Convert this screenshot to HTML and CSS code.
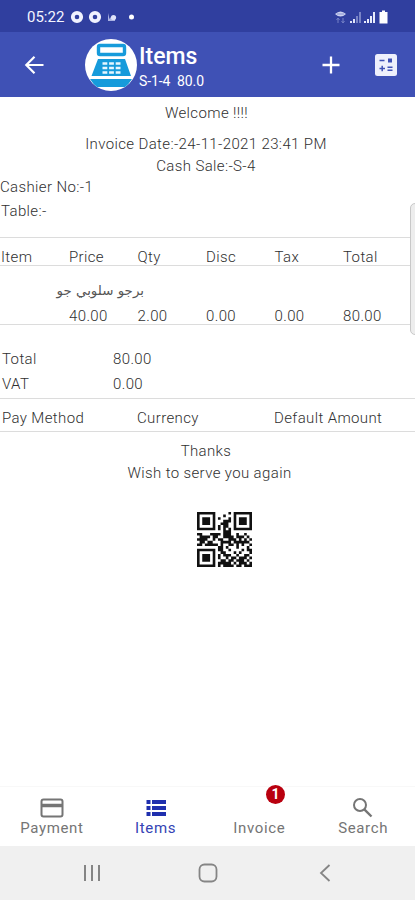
FILE: index.html
```html
<!DOCTYPE html>
<html lang="en">
<head>
<meta charset="utf-8">
<title>Items</title>
<link rel="stylesheet" href="styles.css">
</head>
<body>
<div class="status">
  <span class="clock">05:22</span>
  <svg class="status-left" width="70" height="14" viewBox="0 0 70 14">
    <g fill="none" stroke="#f0f2ff" stroke-width="3.800"><circle cx="7" cy="7" r="4.200"/><circle cx="25" cy="7" r="4.200"/></g>
    <path d="M38 3v8h7V6l-2 2-2-1-1.500 2z" fill="#aab2e2"/><circle cx="43.500" cy="7.500" r="2.600" fill="#dfe3f9"/>
    <circle cx="61.500" cy="7" r="2.500" fill="#fff"/>
  </svg>
  <svg class="status-right" width="56" height="14" viewBox="0 0 56 14">
    <path d="M1 4q5.500-5 11 0q-5.500 5-11 0z" fill="#cbd1f0"/><path d="M3 4h7" stroke="#8994d2"/><path d="M4 8v5M2.500 10L4 8l1.500 2M9 8v5M7.500 11L9 13l1.500-2" stroke="#7480c5" fill="none"/>
    <path d="M17 13v-2M20 13V9" stroke="#dfe3f8" stroke-width="2"/><path d="M23 13V6M26 13V2" stroke="#7984c6" stroke-width="2"/>
    <path d="M31 13v-2M34 13V9M37 13V6M40 13V2" stroke="#e8ebfb" stroke-width="2"/>
    <path d="M48 .5h3V2h2.500v11.500h-8V2H48z" fill="#fff"/>
  </svg>
</div>
<header class="appbar">
  <svg class="back" width="20" height="20" viewBox="0 0 20 20" fill="none" stroke="#fff" stroke-width="2.200"><path d="M19.500 10H2.500M10.500 1.800L2.300 10l8.200 8.200"/></svg>
  <svg class="logo" width="52" height="52" viewBox="0 0 52 52">
    <circle cx="26" cy="26" r="26" fill="#fff"/>
    <rect x="13.500" y="6.500" width="26" height="9" rx="1.500" fill="#fff" stroke="#169bdb" stroke-width="3.400"/>
    <path d="M13 20h27l6 17H6.500zM5 40h42q-3 5-7 8H12q-4-3-7-8z" fill="#169bdb"/>
    <path d="M17.500 24.500h18M17.500 29h18M17.500 33.500h18" stroke="#e6f7ff" stroke-width="2.700" stroke-dasharray="4.800 1.800"/>
  </svg>
  <div class="titles"><div class="title">Items</div><div class="subtitle">S-1-4&nbsp; 80.0</div></div>
  <svg class="plus" width="18" height="18" viewBox="0 0 18 18" stroke="#fff" stroke-width="2.300"><path d="M9 .5v17M.5 9h17"/></svg>
  <svg class="calc" width="22" height="22" viewBox="0 0 22 22"><rect width="22" height="22" rx="2.500" fill="#eef0fc"/><g stroke="#3f51b5" stroke-width="1.500"><path d="M4.500 6.500h5M4.500 14.500h5.500M7.200 11.700v5.600M12.500 13.300h5M12.500 16.200h5"/></g><rect x="13" y="4.500" width="4" height="4" fill="#3f51b5"/></svg>
</header>
<main class="receipt">
  <div class="row center welcome">Welcome !!!!</div>
  <div class="row center date">Invoice Date:-24-11-2021 23:41 PM</div>
  <div class="row center sale">Cash Sale:-S-4</div>
  <div class="row cashier">Cashier No:-1</div>
  <div class="row table-no">Table:-</div>
  <div class="cols head"><span>Item</span><span>Price</span><span>Qty</span><span>Disc</span><span>Tax</span><span>Total</span></div>
  <div class="line-item">
    <div class="product" dir="rtl" lang="ar">برجو سلوبي جو</div>
    <div class="cols"><span></span><span>40.00</span><span>2.00</span><span>0.00</span><span>0.00</span><span>80.00</span></div>
  </div>
  <div class="sum total"><span>Total</span><span>80.00</span></div>
  <div class="sum vat"><span>VAT</span><span>0.00</span></div>
  <div class="pay"><span>Pay Method</span><span>Currency</span><span>Default Amount</span></div>
  <div class="row center thanks">Thanks</div>
  <div class="row center wish">Wish to serve you again</div>
  <svg class="qr" width="55" height="55" viewBox="0 0 21 21"><path id="modules" fill="#111"/></svg>
  <div class="edge-panel"></div>
</main>
<nav class="tabs">
  <div class="tab"><svg width="24" height="20" viewBox="0 0 24 20" fill="none" stroke="#757575"><rect x="1.500" y="1.500" width="21" height="17" rx="2" stroke-width="2"/><path d="M2 7.500h20" stroke-width="3.500"/></svg><span>Payment</span></div>
  <div class="tab active"><svg width="24" height="20" viewBox="0 0 24 20" fill="#1f2fae"><path d="M2.500 2h4v4h-4zM8 2h14v4H8zM2.500 8h4v4h-4zM8 8h14v4H8zM2.500 14h4v4h-4zM8 14h14v4H8z"/></svg><span>Items</span></div>
  <div class="tab"><svg width="24" height="20"></svg><span>Invoice</span><b class="badge">1</b></div>
  <div class="tab"><svg width="24" height="20" viewBox="0 0 24 20" fill="none" stroke="#757575" stroke-width="2"><circle cx="9" cy="7" r="6"/><path d="M13.300 11.300l7.200 7.200" stroke-width="2.400"/></svg><span>Search</span></div>
</nav>
<div class="sysnav">
  <svg width="18" height="18" viewBox="0 0 18 18" stroke="#858585" stroke-width="2"><path d="M2 1v16M9 1v16M16 1v16"/></svg>
  <svg class="home" width="20" height="20" viewBox="0 0 20 20"><rect x="1.500" y="1.500" width="17" height="17" rx="5" fill="none" stroke="#858585" stroke-width="1.800"/></svg>
  <svg width="12" height="18" viewBox="0 0 12 18"><path d="M10.500 1L2 9l8.500 8" fill="none" stroke="#858585" stroke-width="1.800"/></svg>
</div>
<script src="qr.js"></script>
</body>
</html>
```
FILE: styles.css
```css
* { box-sizing: border-box; }
body { margin: 0; width: 415px; height: 900px; overflow: hidden; display: flex; flex-direction: column; background: #fff; font-family: Roboto, "Liberation Sans", sans-serif; }
svg { display: block; flex: none; }
.status { height: 32px; flex: none; background: #303f9f; color: #f4f5ff; display: flex; align-items: center; padding: 1px 25px 0 27px; }
.clock { width: 38px; font-size: 15px; line-height: 18px; white-space: nowrap; }
.status-left { margin-left: 5px; }
.status-right { margin-left: auto; }
.appbar { height: 65px; flex: none; background: #3f51b5; color: #fff; display: flex; align-items: center; padding: 0 18px 0 24px; }
.logo { margin-left: 41px; }
.titles { margin-left: 2px; }
.title { font-size: 23px; line-height: 27px; font-weight: 500; margin-top: 4px; }
.subtitle { font-size: 14px; line-height: 20px; margin-top: 1px; letter-spacing: -.1px; white-space: nowrap; }
.plus { margin-left: auto; margin-right: 35px; }
.receipt { position: relative; overflow: hidden; height: 689px; flex: none; color: #303030; font-size: 15px; font-weight: 300; letter-spacing: .37px; }
.row { height: 21px; line-height: 21px; padding-left: 1px; white-space: nowrap; }
.center { text-align: center; padding-left: 0; }
.welcome { padding-top: 6px; height: 37px; padding-right: 2px; }
.date { padding-right: 3px; }
.sale { padding-right: 3px; height: 22px; line-height: 22px; }
.cashier { padding-left: 0; height: 24px; }
.table-no { height: 36px; }
.cols { display: grid; grid-template-columns: 68px 68.500px 68.500px 68.500px 68.500px 1fr; line-height: 20px; padding-left: 1px; }
.head { height: 29px; border-top: 1px solid #dcdcdc; border-bottom: 1px solid #dcdcdc; padding-top: 9px; }
.line-item { height: 59px; padding-top: 13px; border-bottom: 1px solid #dcdcdc; }
.product { width: 144px; height: 27px; line-height: 24px; font-family: "DejaVu Sans", sans-serif; font-size: 13.400px; font-weight: 400; letter-spacing: 0; text-align: start; color: #555; }
.sum { display: grid; grid-template-columns: 111px 1fr; padding-left: 2px; line-height: 27px; height: 25px; }
.total { margin-top: 21px; }
.pay { display: grid; grid-template-columns: 135px 137px 1fr; margin-top: 2px; height: 34px; border-top: 1px solid #dcdcdc; border-bottom: 1px solid #dcdcdc; line-height: 38px; padding-left: 2px; }
.thanks { height: 30px; padding-top: 9px; padding-right: 3px; }
.wish { padding-left: 4px; height: 22px; line-height: 22px; }
.qr { margin: 28px 0 0 197px; }
.edge-panel { position: absolute; right: -7px; top: 106px; width: 12px; height: 132px; border: 1px solid #c8c8c8; border-radius: 5px; background: #ededed; }
.tabs { height: 60px; flex: none; border-top: 1px solid #f8f8f8; display: grid; grid-template-columns: repeat(4, 1fr); color: #757575; }
.tab { position: relative; display: flex; flex-direction: column; align-items: center; padding-top: 11px; font-size: 15px; line-height: 20px; letter-spacing: .65px; }
.tab.active { color: #3443b4; }
.badge { position: absolute; left: 58.500px; top: -2px; width: 19px; height: 19px; border-radius: 50%; background: #b9000f; color: #fff; font-size: 14px; line-height: 19px; text-align: center; letter-spacing: 0; }
.sysnav { flex: 1; background: #f0f0f0; display: flex; align-items: center; padding: 0 84px 0 83px; justify-content: space-between; }
.home { margin-right: 4px; }
```
FILE: qr.js
```javascript
const rows = [
  "111111100000101111111",
  "100000100010001000001",
  "101110101000101011101",
  "101110100011101011101",
  "101110100111001011101",
  "100000101011001000001",
  "111111101010101111111",
  "000000000011100000000",
  "110001111011100100100",
  "011110110011110111010",
  "111100101100111010101",
  "011011000111101111110",
  "110111110100110101001",
  "000000001101000100010",
  "111111101100100001011",
  "100000100110001010001",
  "101110101011100100110",
  "101110101001011011101",
  "101110100110110111010",
  "100000101111101011101",
  "111111101011110110111"
];
const path = rows.flatMap((row, y) => [...row].map((bit, x) => bit === "1" ? `M${x} ${y}h1v1h-1z` : "")).join("");
document.getElementById("modules").setAttribute("d", path);
```
